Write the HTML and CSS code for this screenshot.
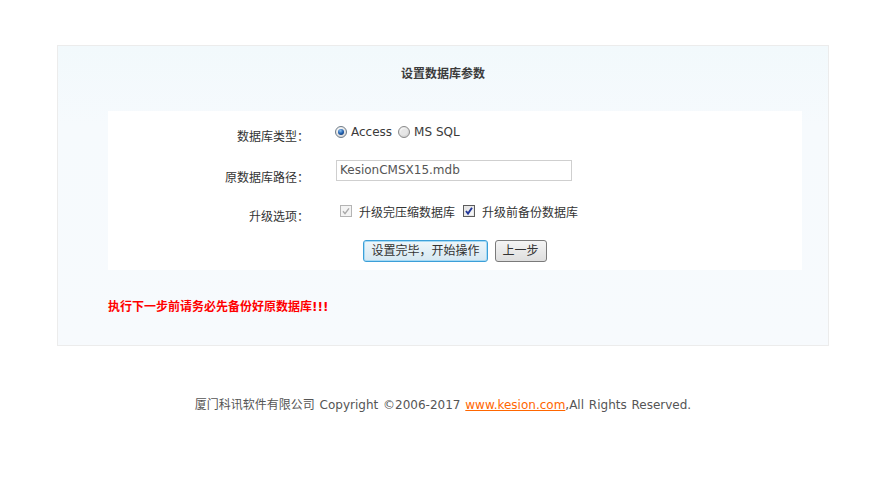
FILE: index.html
```html
<!DOCTYPE html>
<html lang="zh-CN">
<head>
<meta charset="utf-8">
<title>设置数据库参数</title>
<link rel="stylesheet" href="styles.css">
</head>
<body>
<div class="wrap">
  <h2 class="title">设置数据库参数</h2>
  <div class="panel">
    <div class="row row1">
      <div class="lbl">数据库类型：</div>
      <div class="ctl">
        <label class="opt">
          <svg class="radio" width="12" height="12" viewBox="0 0 12 12"><defs><radialGradient id="rg1" cx="0.4" cy="0.35" r="0.7"><stop offset="0" stop-color="#ffffff"/><stop offset="1" stop-color="#d4d4d4"/></radialGradient><radialGradient id="rd1" cx="0.4" cy="0.3" r="0.7"><stop offset="0" stop-color="#8fc3f0"/><stop offset="0.6" stop-color="#2767b5"/><stop offset="1" stop-color="#133f80"/></radialGradient></defs><circle cx="6" cy="6" r="5.5" fill="url(#rg1)" stroke="#6f7c88"/><circle cx="6" cy="6" r="3" fill="url(#rd1)"/></svg>
          <span>Access</span>
        </label>
        <label class="opt">
          <svg class="radio" width="12" height="12" viewBox="0 0 12 12"><defs><radialGradient id="rg2" cx="0.4" cy="0.35" r="0.7"><stop offset="0" stop-color="#ffffff"/><stop offset="1" stop-color="#cfcfcf"/></radialGradient></defs><circle cx="6" cy="6" r="5.5" fill="url(#rg2)" stroke="#8a8a8a"/><circle cx="6" cy="6" r="3" fill="#e6e6e6"/></svg>
          <span>MS SQL</span>
        </label>
      </div>
    </div>
    <div class="row row2">
      <div class="lbl">原数据库路径：</div>
      <div class="ctl">
        <input class="txt" type="text" value="KesionCMSX15.mdb">
      </div>
    </div>
    <div class="row row3">
      <div class="lbl">升级选项：</div>
      <div class="ctl">
        <label class="chk chk1">
          <svg width="12" height="12" viewBox="0 0 12 12"><rect x="0.5" y="0.5" width="11" height="11" fill="#f4f4f4" stroke="#b4b4b4"/><path d="M3 6.3 L5 8.6 L9 3.3" fill="none" stroke="#a9a9a9" stroke-width="1.4"/></svg>
          <span>升级完压缩数据库</span>
        </label>
        <label class="chk chk2">
          <svg width="12" height="12" viewBox="0 0 12 12"><defs><linearGradient id="cg" x1="0" y1="0" x2="1" y2="1"><stop offset="0" stop-color="#dcdcdc"/><stop offset="1" stop-color="#ffffff"/></linearGradient></defs><rect x="0.5" y="0.5" width="11" height="11" fill="url(#cg)" stroke="#5c5c5c"/><rect x="1.5" y="1.5" width="9" height="9" fill="none" stroke="#e8e8e8"/><path d="M3 6 L5 8.6 L9 2.8" fill="none" stroke="#23389a" stroke-width="1.9"/></svg>
          <span>升级前备份数据库</span>
        </label>
      </div>
    </div>
    <div class="row row4">
      <button class="btn btn-primary" type="button">设置完毕，开始操作</button>
      <button class="btn" type="button">上一步</button>
    </div>
  </div>
  <p class="warn">执行下一步前请务必先备份好原数据库!!!</p>
</div>
<div class="footer">厦门科讯软件有限公司 Copyright ©2006-2017 <a href="#">www.kesion.com</a>,All Rights Reserved.</div>
</body>
</html>
```
FILE: styles.css
```css
html, body {
  margin: 0;
  padding: 0;
  background: #ffffff;
}
body {
  font-family: "DejaVu Sans", "Noto Sans CJK SC", sans-serif;
  font-size: 12px;
  color: #333333;
}
.wrap {
  width: 770px;
  margin: 45px 0 0 57px;
  border: 1px solid #ececec;
  background: linear-gradient(#f2f9fc 0px, #f6fafd 80px, #f7fafd 100%);
}
.title {
  margin: 0;
  padding: 18px 0 27px;
  line-height: 20px;
  font-size: 12px;
  font-weight: bold;
  text-align: center;
  color: #3c3c3c;
}
.panel {
  margin-left: 50px;
  width: 694px;
  background: #ffffff;
  padding: 9px 0 8px;
}
.row {
  display: flex;
  align-items: flex-start;
}
.lbl {
  width: 201px;
  text-align: right;
  line-height: 24px;
  color: #333333;
}
.ctl {
  margin-left: 26px;
  display: flex;
  align-items: center;
}
.row1 { height: 36px; }
.row1 .lbl { padding-top: 5px; }
.row1 .ctl { height: 24px; }
.opt {
  display: inline-flex;
  align-items: center;
  margin-right: 6px;
  color: #3a3a3a;
}
.opt svg { margin-right: 4px; }
.row2 { height: 41px; }
.row2 .lbl { padding-top: 10px; }
.row2 .ctl { padding-top: 4px; }
.txt {
  margin: 0 0 0 1px;
  width: 228px;
  height: 19px;
  padding: 0 3px;
  border: 1px solid #cfcfcf;
  font-family: "DejaVu Sans", "Noto Sans CJK SC", sans-serif;
  font-size: 12px;
  color: #555555;
  line-height: 19px;
  box-sizing: content-box;
}
.row3 { height: 32px; }
.row3 .lbl { padding-top: 8px; }
.row3 .ctl { height: 24px; padding-top: 2px; }
.chk {
  display: inline-flex;
  align-items: center;
}
.chk svg { margin-right: 7px; }
.chk1 { margin-left: 5px; margin-right: 8px; }
.row4 {
  justify-content: center;
  padding-top: 11px;
  gap: 7px;
}
.btn {
  margin: 0;
  height: 22px;
  padding: 0 7px;
  border: 1px solid #7a7a7a;
  border-radius: 3px;
  background: linear-gradient(#f4f4f4, #dedede);
  font-family: "DejaVu Sans", "Noto Sans CJK SC", sans-serif;
  font-size: 12px;
  color: #333333;
  line-height: 20px;
}
.btn-primary {
  border-color: #3c9fd8;
  box-shadow: inset 0 0 0 1px #a6daf4;
  background: linear-gradient(#eef6fa, #d6e8f2);
}
.warn {
  margin: 0;
  padding: 27px 0 28px 50px;
  line-height: 20px;
  font-weight: bold;
  color: #ff0000;
}
.footer {
  width: 772px;
  margin: 49px 0 0 57px;
  text-align: center;
  line-height: 20px;
  color: #555555;
  word-spacing: 1px;
}
.footer a {
  color: #ff6600;
  text-decoration: underline;
}
```
